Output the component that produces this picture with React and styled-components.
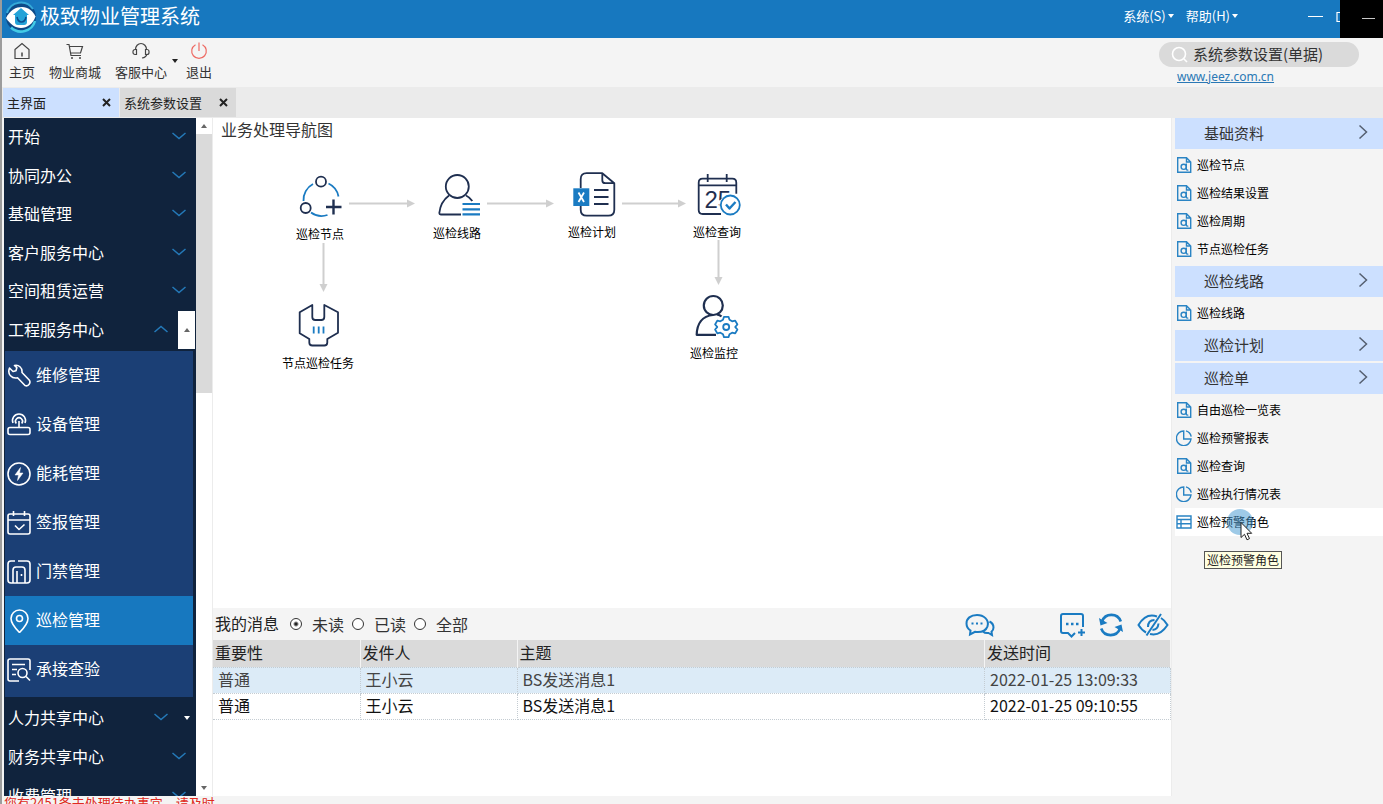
import React, { useState } from "react";
import styled, { createGlobalStyle } from "styled-components";

const NAVY = "#1f2f50";
const BLUE = "#1a7bc2";

const topMenus = ["开始", "协同办公", "基础管理", "客户服务中心", "空间租赁运营"];

const subMenus = [
  { label: "维修管理", icon: "wrench" },
  { label: "设备管理", icon: "router" },
  { label: "能耗管理", icon: "energy" },
  { label: "签报管理", icon: "calendar" },
  { label: "门禁管理", icon: "door" },
  { label: "巡检管理", icon: "pin" },
  { label: "承接查验", icon: "inspect" },
];

const nodes = [
  { label: "巡检节点", icon: "cycle", x: 106, y: 116 },
  { label: "巡检线路", icon: "route", x: 243, y: 115 },
  { label: "巡检计划", icon: "plan", x: 378, y: 114 },
  { label: "巡检查询", icon: "query", x: 503, y: 114 },
  { label: "节点巡检任务", icon: "task", x: 104, y: 245 },
  { label: "巡检监控", icon: "monitor", x: 500, y: 235 },
];

const sections = [
  {
    title: "基础资料",
    items: [
      { label: "巡检节点", icon: "doc" },
      { label: "巡检结果设置", icon: "doc" },
      { label: "巡检周期", icon: "doc" },
      { label: "节点巡检任务", icon: "doc" },
    ],
  },
  { title: "巡检线路", items: [{ label: "巡检线路", icon: "doc" }] },
  { title: "巡检计划", items: [] },
  {
    title: "巡检单",
    items: [
      { label: "自由巡检一览表", icon: "doc" },
      { label: "巡检预警报表", icon: "pie" },
      { label: "巡检查询", icon: "doc" },
      { label: "巡检执行情况表", icon: "pie" },
      { label: "巡检预警角色", icon: "grid", hover: true },
    ],
  },
];

const messages = [
  { level: "普通", from: "王小云", title: "BS发送消息1", time: "2022-01-25 13:09:33" },
  { level: "普通", from: "王小云", title: "BS发送消息1", time: "2022-01-25 09:10:55" },
];

const Logo = () => (
  <svg width="32" height="32" viewBox="0 0 32 32">
    <circle cx="16" cy="16" r="15" fill="#0d4a88" />
    <path d="M2 12A14.500 14.500 0 0 1 28 8" fill="none" stroke="#35a9d8" strokeWidth="2" />
    <path d="M30 20A14.500 14.500 0 0 1 6 26.500" fill="none" stroke="#43cbe6" strokeWidth="2.500" />
    <path d="M1 17C5 9 11 6 17 6s11 4 13.500 9.500C28 23 22 27 16 27S5 23 1 17z" fill="#fff" />
    <path d="M16 7l8 7h-2v7q0 3-3 3h-6q-3 0-3-3v-7H8z" fill="#24a3d8" />
    <path d="M12 16q1 5 4.500 5t4.500-5" fill="none" stroke="#0b4f8f" strokeWidth="1.600" />
  </svg>
);

const toolIcons = {
  home: (
    <>
      <path d="M2 7.500L9 1.500l7 6v9H2z" />
      <path d="M9 10.500v4" strokeWidth="1.500" />
    </>
  ),
  cart: (
    <>
      <path d="M.5 2.500h2.500L5 13.500h10M3.500 4.500h13L14.500 11H4.600" />
      <path d="M5 16h2M13 16h2" strokeWidth="1.600" />
    </>
  ),
  service: (
    <>
      <path d="M3.500 7.500a5.500 6 0 0 1 11 0M15 12q-1 3.500-5 4" />
      <path d="M4.500 7.500v5H3a2 2 0 0 1-2-2v-1a2 2 0 0 1 2-2zM13.500 7.500v5H15a2 2 0 0 0 2-2v-1a2 2 0 0 0-2-2z" />
    </>
  ),
  power: (
    <>
      <path d="M5.500 2.700a7.300 7.300 0 1 0 7 0" />
      <path d="M9 .5V9" />
    </>
  ),
};

const ToolIcon = ({ name, color = "#444" }) => (
  <svg width="18" height="18" viewBox="0 0 18 18" fill="none" stroke={color} strokeWidth="1.200">
    {toolIcons[name]}
  </svg>
);

const subIcons = {
  wrench: (
    <path d="M2.500 4L6 7.500l3-.8.800-3L7.500 1.500C11.500.500 15.500 3.500 15 8.500l7.200 7.500c1.800 2-.2 7-4.200 5.500L10.500 13.800C5 15 0 10.500 2.500 4z" />
  ),
  router: (
    <>
      <rect x="1" y="14.500" width="22" height="7" rx="2" />
      <path d="M12 14.500V8M9.300 10.500a3.500 3.500 0 1 1 5.400 0M6 10a6.500 6.500 0 1 1 12 0" />
    </>
  ),
  energy: (
    <>
      <circle cx="12" cy="12" r="11" />
      <path d="M13.500 5.500L8 13h3.500l-1 5.500L16 11h-3.500z" fill="#fff" strokeWidth=".5" />
    </>
  ),
  calendar: (
    <>
      <rect x="1" y="3" width="22" height="20" rx="2" />
      <path d="M1 9h22M6.500 0v5M17.500 0v5M8 14.500l4 4 5.500-5" />
    </>
  ),
  door: (
    <>
      <path d="M8 1H4a3 3 0 0 0-3 3v16a3 3 0 0 0 3 3h16a3 3 0 0 0 3-3V4a3 3 0 0 0-3-3h-9" />
      <path d="M6 23V10q0-3 3-3h6q3 0 3 3v13M10 23V11M14.500 14v2" />
    </>
  ),
  pin: (
    <>
      <path d="M12.500 23.500Q4 15 4 9.500a8.500 8.500 0 0 1 17 0q0 5.500-8.500 14z" />
      <circle cx="12.500" cy="9.500" r="3" />
    </>
  ),
  inspect: (
    <>
      <path d="M12 23H3a2 2 0 0 1-2-2V3a2 2 0 0 1 2-2h18a2 2 0 0 1 2 2v9M5 6.500h13M5 11.500h5M5 16.500h4" />
      <circle cx="15.500" cy="15" r="4.500" />
      <path d="M19 18.500l4 4" />
    </>
  ),
};

const SubIcon = ({ name }) => (
  <svg
    width="24"
    height="24"
    viewBox="0 0 24 24"
    fill="none"
    stroke="#fff"
    strokeWidth="1.600"
    strokeLinejoin="round"
  >
    {subIcons[name]}
  </svg>
);

const nodeIcons = {
  cycle: (
    <>
      <path d="M8.500 27A18 18 0 0 1 18 10M33.500 9.500A18 18 0 0 1 43.500 22.500M16 38.500A18 18 0 0 0 32.500 41" stroke={BLUE} />
      <circle cx="26" cy="7.700" r="5" />
      <circle cx="10.700" cy="34" r="5" />
      <path d="M31 33h15.500M38.500 25.500v15" strokeWidth="2.400" />
    </>
  ),
  route: (
    <>
      <circle cx="25.300" cy="13.500" r="11.500" />
      <path d="M17 22.500C11 27 8 33 7.300 40q0 1.500 1.500 1.500H29M34 22.500q4 2 6.300 5.500" />
      <path d="M30.500 31H48M30.500 36.300H48M30.500 41.300H48" stroke={BLUE} strokeWidth="2.200" />
    </>
  ),
  plan: (
    <>
      <path d="M13.700 16V7.200q0-6 6-6h15.600l12 10v26.500q0 6-6 6H19.700q-6 0-6-6V34M35.300 1.200v7q0 3 3 3h9" />
      <rect x="6.300" y="16.300" width="16" height="17.700" fill={BLUE} stroke="none" />
      <path d="M11.500 20.500l5.500 9.500M17 20.500L11.500 30" stroke="#fff" />
      <path d="M27 18h14.500M27 25h14.500M27 32h14.500" />
    </>
  ),
  query: (
    <>
      <path d="M29 42H10.700q-4 0-4-4V10.700q0-4 4-4h29.600q4 0 4 4v11M6.700 13.300h37.600M15.700 2v8M34.700 2v8" />
      <text
        x="12.500"
        y="36"
        fontSize="24"
        fontFamily="'Liberation Sans', sans-serif"
        fill={NAVY}
        stroke="none"
      >
        25
      </text>
      <circle cx="38.300" cy="33" r="11" fill="#fff" stroke="none" />
      <circle cx="38.300" cy="33" r="9.500" stroke={BLUE} />
      <path d="M34 32.500l3.500 4 6-6.500" stroke={BLUE} strokeWidth="2.400" />
    </>
  ),
  task: (
    <>
      <path d="M6.700 9.300L19.300 2v12q0 3 3 3h6q3 0 3-3V2L45 9.300v20.400L34.300 36v3.500q0 3-3 3h-12q-3 0-3-3V36L6.700 30.300z" />
      <path d="M20.700 23.500v7M25.700 23.500v7M30.500 23.500v7" stroke={BLUE} />
    </>
  ),
  monitor: (
    <>
      <circle cx="24.300" cy="12.500" r="9.500" strokeWidth="2.200" />
      <path d="M24 22C13 23 8 31 7.700 41.800H27M28 21.500q3 .5 4.500 2" strokeWidth="2.200" />
      <path
        d="M35 23.800h4.500l1 3 2.600 1.500 3.100-.7 2.200 3.900-2.100 2.300 0 .4 2.100 2.300-2.200 3.900-3.100-.7-2.600 1.500-1 3H35l-1-3-2.600-1.500-3.100.7-2.200-3.900 2.100-2.300v-.4l-2.100-2.300 2.200-3.900 3.100.7L34 26.800z"
        stroke={BLUE}
      />
      <circle cx="37.200" cy="34" r="3" stroke={BLUE} />
    </>
  ),
};

const NodeIcon = ({ name }) => (
  <svg
    width="50"
    height="48"
    viewBox="0 0 50 48"
    fill="none"
    stroke={NAVY}
    strokeWidth="1.800"
    strokeLinejoin="round"
  >
    {nodeIcons[name]}
  </svg>
);

const listIcons = {
  doc: (
    <>
      <path d="M1.700.700h8.800L14.700 5v10.300h-13zM10.500.700V5h4.200" />
      <circle cx="7.700" cy="9.800" r="2.600" />
      <path d="M10.300 6.500v5.800q.3 1 2 .8" />
    </>
  ),
  pie: (
    <>
      <path d="M7.700 1A7.300 7.300 0 1 0 15 9H7.700z" />
      <path d="M10 .900A7.300 7.300 0 0 1 15.200 6.700" />
    </>
  ),
  grid: <path d="M1 2h14v12H1zM1 5.500h14M5 5.500V14M5 9.800h10M1 9.800h4" />,
};

const ListIcon = ({ name }) => (
  <svg width="16" height="16" viewBox="0 0 16 16" fill="none" stroke="#2a84c4" strokeWidth="1.400">
    {listIcons[name]}
  </svg>
);

const Chevron = ({ up }) => (
  <svg width="14" height="8" viewBox="0 0 14 8" fill="none" stroke="#2479b8" strokeWidth="1.500">
    <path d={up ? "M0.500 7L7 1.500 13.500 7" : "M0.500 1L7 6.500 13.500 1"} />
  </svg>
);

const MessageIcons = () => (
  <MessageActions>
    <IconButton aria-label="会话">
      <svg width="30" height="24" viewBox="0 0 30 24" fill="none" stroke={BLUE} strokeWidth="2">
        <path d="M12 2C5.500 2 1.500 5.500 1.500 10.500q0 4.500 4 7l-.5 4 5-2.700q10 1.200 12.500-5.500C24.500 6.500 18.500 2 12 2z" />
        <path d="M24.500 8.500q4 2 4 6 0 2.500-2 4.200l.5 3.300-3.500-2q-3.500.5-5.500-1.500" />
        <path d="M6.500 10.500h2M11 10.500h2M15.500 10.500h2" />
      </svg>
    </IconButton>
    <Spacer />
    <IconButton aria-label="新消息">
      <svg width="26" height="26" viewBox="0 0 26 26" fill="none" stroke={BLUE} strokeWidth="2">
        <path d="M24 15V4q0-2-2-2H4Q2 2 2 4v15q0 2 2 2h5l3.500 3.500L16 21" />
        <path d="M7 12h2.500M12 12h2.500M17 12h2.500" strokeWidth="2.500" />
        <path d="M22.500 17v7M19 20.500h7" />
      </svg>
    </IconButton>
    <IconButton aria-label="刷新">
      <svg width="26" height="26" viewBox="0 0 26 26" fill="none" stroke={BLUE} strokeWidth="2.600">
        <path d="M4 9.500A10 10 0 0 1 22.800 9.500M22 16.500A10 10 0 0 1 3.200 16.500" />
        <path d="M1 6l1.500 7.500L9.500 11zM25 20l-1.500-7.500L16.500 15z" fill={BLUE} stroke="none" />
      </svg>
    </IconButton>
    <IconButton aria-label="隐藏">
      <svg width="32" height="24" viewBox="0 0 32 24" fill="none" stroke={BLUE} strokeWidth="2">
        <path d="M20 3.500Q9-.5 1.500 12q3.500 5.500 7.500 7.500M13 21q10 2.500 17.500-9Q27.500 7 24 5" />
        <path d="M24 1L9.500 22.500M17.500 7Q11 7 11 14M15.500 17q5.500-.5 6-6.500" />
      </svg>
    </IconButton>
  </MessageActions>
);

const Arrows = () => (
  <ArrowLayer fill="#cfcfcf" stroke="#cfcfcf">
    <path d="M136 85.500h58M274 85.500h59M409 85.500h56M110.500 125v42M505.500 122v38" strokeWidth="2" />
    <path
      stroke="none"
      d="M194 81.500l8 4-8 4zM333 81.500l8 4-8 4zM465 81.500l8 4-8 4zM106.500 166h8l-4 8zM501.500 159h8l-4 8z"
    />
  </ArrowLayer>
);

export default function App() {
  const [filter, setFilter] = useState("未读");
  const [keyword, setKeyword] = useState("系统参数设置(单据)");

  const SubMenuList = subMenus.map(({ label, icon }) => (
    <SubItem key={label} $active={label === "巡检管理"}>
      <SubIcon name={icon} />
      <span>{label}</span>
    </SubItem>
  ));

  return (
    <>
      <GlobalStyle />
      <Window>
        <TitleBar>
          <Logo />
          <h1>极致物业管理系统</h1>
          <TitleMenu>
            <button>
              系统(S)
              <Caret />
            </button>
            <button>
              帮助(H)
              <Caret />
            </button>
          </TitleMenu>
          <WindowButtons>
            <svg width="32" height="14" viewBox="0 0 32 14" fill="none" stroke="#fff" strokeWidth="1.200">
              <path d="M0 6.500h15M32 2.500h-3v9h3" />
            </svg>
          </WindowButtons>
          <BlackBox>
            <svg width="13" height="2">
              <rect width="13" height="1" fill="#c8c8c8" />
            </svg>
          </BlackBox>
        </TitleBar>

        <ToolBar>
          <ToolButton>
            <ToolIcon name="home" />
            主页
          </ToolButton>
          <ToolButton>
            <ToolIcon name="cart" />
            物业商城
          </ToolButton>
          <ToolButton>
            <ToolIcon name="service" />
            客服中心
          </ToolButton>
          <DropButton aria-label="更多">
            <Caret $dark />
          </DropButton>
          <ToolButton>
            <ToolIcon name="power" color="#ee6a63" />
            退出
          </ToolButton>
          <SearchArea>
            <SearchBox>
              <svg width="18" height="18" viewBox="0 0 18 18" fill="none" stroke="#fff" strokeWidth="1.600">
                <circle cx="8" cy="8" r="6.500" />
                <path d="M13 13l3 3" />
              </svg>
              <input
                aria-label="搜索"
                value={keyword}
                onChange={(e) => setKeyword(e.target.value)}
              />
            </SearchBox>
            <a href="#jeez">www.jeez.com.cn</a>
          </SearchArea>
        </ToolBar>

        <TabBar>
          <Tab $active>
            主界面
            <TabClose />
          </Tab>
          <Tab>
            系统参数设置
            <TabClose />
          </Tab>
        </TabBar>

        <Body>
          <SideNav>
            <MenuGroup>
              {topMenus.map((label) => (
                <MenuRow key={label}>
                  <button>
                    {label}
                    <Chevron />
                  </button>
                </MenuRow>
              ))}
              <MenuRow>
                <button>
                  工程服务中心
                  <Chevron up />
                </button>
                <MenuScroll $light aria-label="向上">
                  <Caret $up $grey />
                </MenuScroll>
              </MenuRow>
            </MenuGroup>
            <SubMenu>{SubMenuList}</SubMenu>
            <MenuRow>
              <button>
                人力共享中心
                <Chevron />
              </button>
              <MenuScroll aria-label="向下">
                <Caret />
              </MenuScroll>
            </MenuRow>
            <MenuRow>
              <button>
                财务共享中心
                <Chevron />
              </button>
            </MenuRow>
            <MenuRow>
              <button>
                收费管理
                <Chevron />
              </button>
            </MenuRow>
          </SideNav>

          <ScrollTrack>
            <ScrollEnd>
              <Caret $up $grey />
            </ScrollEnd>
            <ScrollThumb />
            <ScrollEnd>
              <Caret $grey />
            </ScrollEnd>
          </ScrollTrack>

          <Center>
            <Canvas>
              <h2>业务处理导航图</h2>
              <Arrows />
              {nodes.map(({ label, icon, x, y }) => (
                <Node key={label} $x={x} $y={y}>
                  <NodeIcon name={icon} />
                  <span>{label}</span>
                </Node>
              ))}
            </Canvas>

            <Messages>
              <MessageBar>
                <strong>我的消息</strong>
                {["未读", "已读", "全部"].map((name) => (
                  <RadioLabel key={name}>
                    <input
                      type="radio"
                      name="filter"
                      checked={filter === name}
                      onChange={() => setFilter(name)}
                    />
                    {name}
                  </RadioLabel>
                ))}
                <MessageIcons />
              </MessageBar>
              <Table>
                <colgroup>
                  <col width="147" />
                  <col width="157" />
                  <col />
                  <col width="186" />
                </colgroup>
                <thead>
                  <tr>
                    <th>重要性</th>
                    <th>发件人</th>
                    <th>主题</th>
                    <th>发送时间</th>
                  </tr>
                </thead>
                <tbody>
                  {messages.map((m, idx) => (
                    <MessageRow key={m.time} $selected={idx === 0}>
                      <td>{m.level}</td>
                      <td>{m.from}</td>
                      <td>{m.title}</td>
                      <td>{m.time}</td>
                    </MessageRow>
                  ))}
                </tbody>
              </Table>
            </Messages>
          </Center>

          <RightPanel>
            {sections.map(({ title, items }) => (
              <section key={title}>
                <SectionHead>
                  {title}
                  <svg width="10" height="16" viewBox="0 0 10 16" fill="none" stroke="#555f70" strokeWidth="1.500">
                    <path d="M1.500 1.500L8.500 8l-7 6.500" />
                  </svg>
                </SectionHead>
                {items.length > 0 && (
                  <SectionList>
                    {items.map(({ label, icon, hover }) => (
                      <ListItem key={label} $hover={hover}>
                        <button>
                          <ListIcon name={icon} />
                          <span>{label}</span>
                        </button>
                        {hover && (
                          <>
                            <Pointer>
                              <svg width="40" height="40" viewBox="0 0 40 40">
                                <circle cx="13" cy="13" r="13" fill="#3d95d0" opacity=".5" />
                                <path
                                  d="M14 13.500v15l3.500-3.200 2.500 5.500 2.500-1.200-2.500-5.300h4.700z"
                                  fill="#fff"
                                  stroke="#222"
                                />
                              </svg>
                            </Pointer>
                            <Tooltip role="tooltip">{label}</Tooltip>
                          </>
                        )}
                      </ListItem>
                    ))}
                  </SectionList>
                )}
              </section>
            ))}
          </RightPanel>
        </Body>

        <StatusBar>您有2451条未处理待办事宜，请及时</StatusBar>
      </Window>
    </>
  );
}

const TabClose = () => (
  <CloseButton aria-label="关闭">
    <svg width="9" height="9" viewBox="0 0 9 9" stroke="#222" strokeWidth="2">
      <path d="M1 1l7 7M8 1L1 8" />
    </svg>
  </CloseButton>
);

const GlobalStyle = createGlobalStyle`
  * {
    box-sizing: border-box;
  }
  body {
    margin: 0;
    overflow: hidden;
    font-family: "Noto Sans CJK SC", sans-serif;
    font-size: 16px;
    color: #222;
  }
  button,
  input {
    margin: 0;
    padding: 0;
    border: none;
    background: none;
    font: inherit;
    color: inherit;
  }
  svg {
    display: block;
    flex-shrink: 0;
  }
`;

const Window = styled.div`
  display: flex;
  flex-direction: column;
  height: 100vh;
  border-left: 2px solid #9c9c9c;
  background-color: #f4f4f4;
`;

const Caret = styled.i`
  width: 0;
  height: 0;
  flex-shrink: 0;
  border: 3px solid transparent;
  border-${(props) => (props.$up ? "bottom" : "top")}: 4px solid
    ${(props) => (props.$grey ? "#666" : props.$dark ? "#222" : "#fff")};
  border-${(props) => (props.$up ? "top" : "bottom")}: none;
`;

const TitleBar = styled.header`
  position: relative;
  display: flex;
  align-items: center;
  height: 38px;
  flex-shrink: 0;
  padding: 0 12px 4px 3px;
  background-color: #1778bf;
  color: white;
  h1 {
    margin: 0 auto 0 3px;
    padding-bottom: 2px;
    font-size: 20px;
    line-height: 28px;
    font-weight: normal;
  }
`;

const TitleMenu = styled.nav`
  display: flex;
  gap: 12px;
  margin-right: 70px;
  padding-bottom: 2px;
  button {
    display: flex;
    align-items: center;
    gap: 2px;
    font-size: 13px;
    line-height: 20px;
  }
`;

const WindowButtons = styled.div`
  margin-right: 31px;
`;

const BlackBox = styled.div`
  position: absolute;
  top: 0;
  right: 0;
  display: flex;
  align-items: center;
  justify-content: center;
  width: 43px;
  height: 38px;
  padding-left: 14px;
  background-color: black;
`;

const ToolBar = styled.div`
  display: flex;
  align-items: flex-start;
  gap: 14px;
  height: 49px;
  flex-shrink: 0;
  padding: 4px 24px 0 7px;
`;

const ToolButton = styled.button`
  display: flex;
  flex-direction: column;
  align-items: center;
  gap: 2px;
  font-size: 13px;
  line-height: 20px;
  color: #333;
`;

const DropButton = styled.button`
  display: flex;
  margin: 17px -6px 0 -9px;
`;

const SearchArea = styled.div`
  margin-left: auto;
  width: 200px;
  a {
    display: block;
    padding-left: 18px;
    font-family: "Noto Sans", sans-serif;
    font-size: 12px;
    line-height: 20px;
    color: #2a78b5;
  }
`;

const SearchBox = styled.div`
  display: flex;
  align-items: center;
  gap: 4px;
  height: 25px;
  padding-left: 12px;
  border-radius: 13px;
  background-color: #dadada;
  input {
    width: 150px;
    height: 24px;
    padding-bottom: 2px;
    font-size: 15px;
    color: #333;
  }
`;

const TabBar = styled.div`
  display: flex;
  gap: 1px;
  height: 31px;
  flex-shrink: 0;
  padding: 1px 0 1px 1px;
  background-color: #ebebeb;
`;

const Tab = styled.div`
  display: flex;
  align-items: center;
  justify-content: space-between;
  width: 116px;
  padding: 0 8px 0 4px;
  font-size: 13px;
  background-color: ${(props) => (props.$active ? "#cce0ff" : "#dadada")};
`;

const CloseButton = styled.button`
  display: flex;
`;

const Body = styled.div`
  display: flex;
  flex: 1;
  min-height: 0;
  padding-left: 2px;
`;

const SideNav = styled.nav`
  width: 192px;
  flex-shrink: 0;
  overflow: hidden;
  background-color: #10233d;
  color: white;
`;

const MenuRow = styled.div`
  display: flex;
  height: 39px;
  > button:first-child {
    display: flex;
    flex: 1;
    align-items: center;
    justify-content: space-between;
    padding: 0 10px 2px 4px;
  }
`;

const MenuGroup = styled.div`
  display: grid;
  grid-template-rows: repeat(6, 1fr);
  height: 233px;
  padding-bottom: 2px;
  ${MenuRow} {
    height: auto;
  }
`;

const MenuScroll = styled.button`
  display: flex;
  align-items: center;
  justify-content: center;
  width: 17px;
  margin-right: 1px;
  background-color: ${(props) => (props.$light ? "white" : "transparent")};
`;

const SubMenu = styled.div`
  margin: 0 3px 1px 1px;
  padding-bottom: 3px;
  background-color: #1b3f75;
`;

const SubItem = styled.button`
  display: flex;
  align-items: center;
  gap: 5px;
  width: 100%;
  height: 49px;
  padding-left: 2px;
  background-color: ${(props) => (props.$active ? "#1778bf" : "transparent")};
  span {
    padding-bottom: 4px;
  }
`;

const ScrollTrack = styled.div`
  display: flex;
  flex-direction: column;
  width: 16px;
  flex-shrink: 0;
  background-color: white;
`;

const ScrollEnd = styled.div`
  display: flex;
  align-items: center;
  justify-content: center;
  height: 16px;
`;

const ScrollThumb = styled.div`
  height: 259px;
  margin-bottom: auto;
  background-color: #dadada;
`;

const Center = styled.main`
  display: flex;
  flex-direction: column;
  flex: 1;
  min-width: 0;
  border-left: 1px solid #ececec;
  background-color: white;
`;

const Canvas = styled.div`
  position: relative;
  flex: 1;
  h2 {
    margin: 0;
    padding-left: 8px;
    font-size: 16px;
    line-height: 22px;
    font-weight: normal;
    color: #333;
  }
`;

const ArrowLayer = styled.svg`
  position: absolute;
  top: 0;
  left: 0;
  width: 100%;
  height: 100%;
`;

const Node = styled.button`
  position: absolute;
  left: ${(props) => props.$x - 44}px;
  top: ${(props) => props.$y - 60}px;
  display: flex;
  flex-direction: column;
  align-items: center;
  gap: 4px;
  width: 90px;
  font-size: 12px;
  line-height: 16px;
  color: black;
`;

const Messages = styled.div`
  height: 188px;
`;

const MessageBar = styled.div`
  display: flex;
  align-items: center;
  height: 32px;
  padding: 0 2px;
  background-color: #f4f4f4;
  strong {
    margin-right: 11px;
    padding-bottom: 2px;
    font-weight: normal;
  }
`;

const RadioLabel = styled.label`
  display: flex;
  align-items: center;
  gap: 10px;
  margin-right: 8px;
  color: #333;
  input {
    appearance: none;
    width: 12px;
    height: 12px;
    border: 1px solid #333;
    border-radius: 50%;
    background-color: white;
  }
  input:checked {
    background-image: radial-gradient(circle, #222 1px, transparent 3px);
  }
`;

const MessageActions = styled.div`
  display: flex;
  align-items: center;
  gap: 13px;
  margin-left: auto;
  padding-top: 2px;
`;

const Spacer = styled.div`
  width: 38px;
`;

const IconButton = styled.button`
  display: flex;
`;

const Table = styled.table`
  width: 100%;
  table-layout: fixed;
  border-collapse: collapse;
  text-align: left;
  th {
    height: 27px;
    padding: 0 2px 2px;
    border-right: 1px solid #f4f4f4;
    background-color: #dadada;
    font-weight: normal;
    line-height: 22px;
  }
  td {
    height: 26px;
    padding: 0 5px 3px;
    border: 1px dotted #c4ccd2;
    border-left: none;
    line-height: 22px;
  }
`;

const MessageRow = styled.tr`
  color: ${(props) => (props.$selected ? "#444" : "#111")};
  background-color: ${(props) => (props.$selected ? "#dcebf7" : "white")};
`;

const RightPanel = styled.aside`
  width: 212px;
  flex-shrink: 0;
  padding-left: 3px;
  border-left: 1px solid #ececec;
`;

const SectionHead = styled.button`
  display: flex;
  align-items: center;
  justify-content: space-between;
  width: 100%;
  height: 31px;
  margin-bottom: 2px;
  padding: 0 15px 3px 29px;
  background-color: #cce0ff;
  font-size: 15px;
  color: #333;
`;

const SectionList = styled.ul`
  margin: 0;
  padding: 0 0 3px;
  list-style: none;
`;

const ListItem = styled.li`
  position: relative;
  height: 28px;
  background-color: ${(props) => (props.$hover ? "white" : "transparent")};
  button {
    display: flex;
    align-items: center;
    gap: 5px;
    height: 100%;
    padding-left: 1px;
    font-size: 12px;
    color: black;
  }
  span {
    padding-bottom: 2px;
  }
`;

const Pointer = styled.div`
  position: absolute;
  top: 1px;
  left: 52px;
`;

const Tooltip = styled.div`
  position: absolute;
  top: 43px;
  left: 29px;
  padding: 0 2px;
  border: 1px solid #555;
  background-color: #ffffe1;
  font-size: 12px;
  line-height: 16px;
  white-space: nowrap;
  color: #222;
`;

const StatusBar = styled.footer`
  height: 8px;
  flex-shrink: 0;
  overflow: hidden;
  padding-left: 2px;
  font-size: 13px;
  line-height: 14px;
  color: #e02a20;
`;
